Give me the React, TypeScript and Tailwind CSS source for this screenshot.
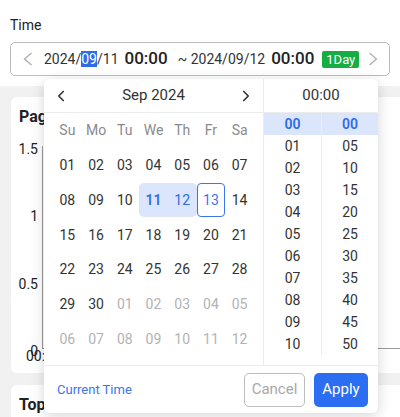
import { ChevronLeft, ChevronRight } from "lucide-react";

const weekdays = ["Su", "Mo", "Tu", "We", "Th", "Fr", "Sa"];

// Sep 2024 grid, flag marks days outside the month
const days: { d: string; out?: boolean }[] = [
  ...Array.from({ length: 30 }, (_, i) => ({ d: String(i + 1).padStart(2, "0") })),
  ...Array.from({ length: 12 }, (_, i) => ({ d: String(i + 1).padStart(2, "0"), out: true })),
];

const hours = Array.from({ length: 11 }, (_, i) => String(i).padStart(2, "0"));
const minutes = Array.from({ length: 11 }, (_, i) => String(i * 5).padStart(2, "0"));

function Arrow({ right }: { right?: boolean }) {
  return (
    <svg width="10" height="14" viewBox="0 0 10 14" className="text-[#b0b0b0]">
      <polyline
        points={right ? "1.5,1 8.5,7 1.5,13" : "8.5,1 1.5,7 8.5,13"}
        fill="none"
        stroke="currentColor"
        strokeWidth="1.4"
      />
    </svg>
  );
}

function DayCell({ d, out }: { d: string; out?: boolean }) {
  if (!out && d === "11")
    return (
      <div className="flex h-[34px] items-center justify-center rounded-l-[5px] bg-[#dbe5fc] font-semibold text-[#2f6de8]">
        {d}
      </div>
    );
  if (!out && d === "12")
    return (
      <div className="flex h-[34px] items-center justify-center rounded-r-[5px] bg-[#dbe5fc] text-[#2f6de8]">
        {d}
      </div>
    );
  if (!out && d === "13")
    return (
      <div className="flex h-[34px] items-center justify-center rounded-[4px] border border-[#3b74ee] text-[#3b74ee]">
        {d}
      </div>
    );
  return (
    <div className={`flex h-[34px] items-center justify-center ${out ? "text-[#b3b3b3]" : "text-[#333]"}`}>
      {d}
    </div>
  );
}

function Picker() {
  return (
    <div className="absolute left-[44px] top-[79px] w-[334px] rounded-[6px] bg-white shadow-[0_3px_14px_rgba(0,0,0,0.16)]">
      <div className="flex">
        {/* calendar */}
        <div className="w-[219px]">
          <div className="flex h-[34px] items-center justify-between border-b border-[#ececec] px-[8px] text-[#333]">
            <ChevronLeft size={18} strokeWidth={2.2} />
            <span className="text-[15px]">Sep 2024</span>
            <ChevronRight size={18} strokeWidth={2.2} />
          </div>
          <div className="grid grid-cols-7 gap-y-[0.7px] px-[9px] pb-[9px] text-[14px]">
            {weekdays.map((w) => (
              <div key={w} className="flex h-[35px] items-center justify-center text-[#8a8a8a]">
                {w}
              </div>
            ))}
            {days.map((c, i) => (
              <DayCell key={i} d={c.d} out={c.out} />
            ))}
          </div>
        </div>
        {/* time */}
        <div className="w-[115px] border-l border-[#ececec]">
          <div className="flex h-[34px] items-center justify-center border-b border-[#ececec] text-[15px] text-[#333]">
            00:00
          </div>
          <div className="flex text-[14px] text-[#333]">
            <div className="w-[57px]">
              {hours.map((h, i) => (
                <div
                  key={h}
                  className={`flex h-[22px] items-center justify-center ${i === 0 ? "bg-[#dbe5fc] font-semibold text-[#2f6de8]" : ""}`}
                >
                  {h}
                </div>
              ))}
            </div>
            <div className="w-[57px] border-l border-[#ececec]">
              {minutes.map((m, i) => (
                <div
                  key={m}
                  className={`flex h-[22px] items-center justify-center ${i === 0 ? "bg-[#dbe5fc] font-semibold text-[#2f6de8]" : ""}`}
                >
                  {m}
                </div>
              ))}
            </div>
          </div>
        </div>
      </div>
      <div className="flex h-[48px] items-center border-t border-[#ececec] pl-[13px] pr-[10px]">
        <span className="text-[13px] text-[#3b74ee]">Current Time</span>
        <button className="ml-auto h-[34px] w-[61px] rounded-[5px] border border-[#bdbdbd] text-[15px] text-[#a8a8a8]">
          Cancel
        </button>
        <button className="ml-[9px] h-[34px] w-[54px] rounded-[5px] bg-[#2c6ef2] text-[15px] text-white">
          Apply
        </button>
      </div>
    </div>
  );
}

export default function App() {
  return (
    <div className="relative h-[417px] w-[400px] overflow-hidden bg-[#f1f1f1] font-['Roboto','Liberation_Sans',sans-serif] text-[#222]">
      <div className="bg-white px-[10px] pb-[10px] pt-[16px]">
        <div className="text-[14px] leading-[18px]">Time</div>
        <div className="mt-[8px] flex h-[34px] items-center rounded-[5px] border border-[#bcbcbc] pl-[12px] pr-[11px]">
          <Arrow />
          <div className="ml-[11px] flex items-baseline whitespace-nowrap">
            <span className="text-[14px] text-[#333]">
              2024/<span className="bg-[#2f6de8] text-white">09</span>/11
            </span>
            <span className="ml-[6px] text-[17px] font-medium text-[#222]">00:00</span>
            <span className="ml-[10px] text-[14px] text-[#333]">~ 2024/09/12</span>
            <span className="ml-[6px] text-[17px] font-medium text-[#222]">00:00</span>
          </div>
          <span className="ml-[8px] rounded-[2px] bg-[#17ad45] px-[4px] text-[13px] leading-[17px] text-white">
            1Day
          </span>
          <span className="ml-auto">
            <Arrow right />
          </span>
        </div>
      </div>

      <div className="flex flex-col gap-[12px] pl-[11px] pt-[11px]">
        <div className="h-[276px] w-[400px] rounded-[6px] bg-white px-[8px] pt-[8px]">
          <div className="text-[16px] font-bold">Page load time</div>
          <div className="mt-[12px] flex">
            <div className="flex h-[218px] w-[19px] flex-col items-end justify-between text-[14px] leading-[16px]">
              <span>1.5</span>
              <span>1</span>
              <span>0.5</span>
              <span>0</span>
            </div>
            <div className="ml-[4px] mt-[5px] h-[203px] w-[380px] border-b border-l border-[#9a9a9a]" />
          </div>
          <div className="-mt-[10px] ml-[7px] text-[14px] leading-[14px]">00:00</div>
        </div>
        <div className="h-[60px] w-[400px] rounded-[6px] bg-white px-[8px] pt-[8px]">
          <div className="text-[16px] font-bold">Top 10 page load times</div>
        </div>
      </div>

      <Picker />
    </div>
  );
}
